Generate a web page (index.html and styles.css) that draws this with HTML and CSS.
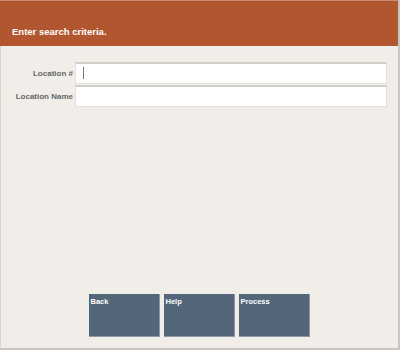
FILE: index.html
```html
<!DOCTYPE html>
<html>
<head>
<meta charset="utf-8">
<link rel="stylesheet" href="styles.css">
</head>
<body>
<div class="screen">
  <div class="header">Enter search criteria.</div>
  <div class="form">
    <div class="row">
      <label class="label">Location #</label>
      <div class="input"><span class="caret"></span></div>
    </div>
    <div class="row">
      <label class="label">Location Name</label>
      <div class="input"></div>
    </div>
  </div>
  <div class="buttons">
    <div class="btn">Back</div>
    <div class="btn">Help</div>
    <div class="btn">Process</div>
  </div>
</div>
</body>
</html>
```
FILE: styles.css
```css
html, body {
  margin: 0;
  padding: 0;
  background: #f1eee9;
}
.screen {
  box-sizing: border-box;
  width: 400px;
  height: 350px;
  display: flex;
  flex-direction: column;
  background: #f1eee9;
  border-left: 1px solid #d9d4cd;
  border-right: 2px solid #c9c5c0;
  border-bottom: 2px solid #c9c5c0;
  font-family: "Liberation Sans", Arial, sans-serif;
}
.header {
  height: 46px;
  box-sizing: border-box;
  background: #b1562f;
  border-top: 1px solid #c98c72;
  color: #ffffff;
  font-weight: bold;
  font-size: 9.5px;
  padding: 25px 0 0 12px;
  margin-left: -1px;
}
.form {
  flex: 1;
  display: flex;
  flex-direction: column;
  gap: 1px;
  padding: 16px 11px 0 0;
}
.row {
  display: flex;
  align-items: center;
  gap: 2px;
}
.label {
  width: 72px;
  text-align: right;
  font-size: 8px;
  font-weight: bold;
  color: #666666;
  flex-shrink: 0;
}
.input {
  flex: 1;
  height: 22px;
  box-sizing: border-box;
  background: #ffffff;
  border: 1px solid #e4e1dc;
  border-top: 2px solid #d2cec8;
  position: relative;
}
.caret {
  position: absolute;
  left: 7px;
  top: 3px;
  width: 1px;
  height: 12px;
  background: #777;
}
.buttons {
  display: flex;
  justify-content: center;
  gap: 4px;
  padding: 0 1px 11px 0;
}
.btn {
  width: 71px;
  height: 43px;
  box-sizing: border-box;
  background: #546679;
  color: #ffffff;
  font-size: 7.5px;
  font-weight: bold;
  padding: 3px 0 0 2px;
  border-right: 1px solid #8c98a4;
  border-bottom: 1px solid #8c98a4;
}
```
